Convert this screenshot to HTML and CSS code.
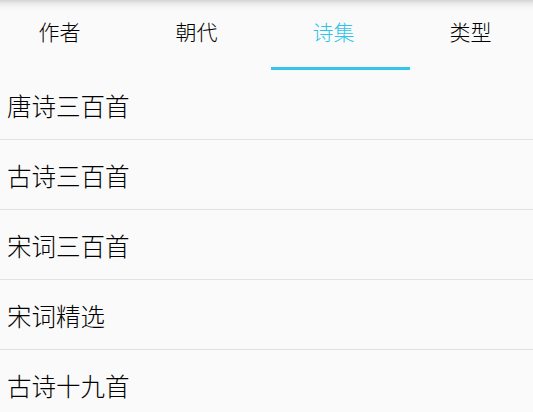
FILE: index.html
```html
<!DOCTYPE html>
<html lang="zh">
<head>
  <meta charset="UTF-8" />
  <meta name="viewport" content="width=device-width, initial-scale=1.0" />
  <title>诗集</title>
  <link rel="stylesheet" href="styles.css">
</head>
<body>
  <div class="tab-bar">
    <div class="tabs">
      <div class="tab">作者</div>
      <div class="tab">朝代</div>
      <div class="tab active">诗集</div>
      <div class="tab">类型</div>
    </div>
  </div>

  <ul class="list">
    <li class="item">唐诗三百首</li>
    <li class="item">古诗三百首</li>
    <li class="item">宋词三百首</li>
    <li class="item">宋词精选</li>
    <li class="item">古诗十九首</li>
  </ul>
</body>
</html>
```

FILE: styles.css
```css
* {
  margin: 0;
  padding: 0;
  box-sizing: border-box;
}
body {
  font-family: "Noto Sans CJK SC", "Noto Sans", sans-serif;
  font-weight: 300;
  background: #fafafa;
  color: #000;
  width: 533px;
  height: 412px;
  overflow: hidden;
}
.tab-bar {
  height: 70px;
  overflow: hidden;
  background: linear-gradient(180deg, #d4d4d4 0px, #ececec 4px, #f7f7f7 8px, #fafafa 12px);
}
.tabs {
  display: flex;
  margin-left: -9px;
  height: 100%;
}
.tab {
  flex: 0 0 137px;
  position: relative;
  display: flex;
  justify-content: center;
  padding-top: 16px;
  font-size: 21px;
  line-height: 30px;
  color: #000;
}
.tab.active {
  color: #2ec4ea;
}
.tab.active::after {
  content: "";
  position: absolute;
  left: 6px;
  bottom: 0;
  width: 139px;
  height: 3px;
  background: #33c6e8;
}
.list {
  list-style: none;
}
.item {
  height: 70px;
  border-bottom: 1px solid #e2e2e2;
  padding: 18px 0 0 7px;
  font-size: 24.5px;
  line-height: 36px;
  color: #000;
}
```
